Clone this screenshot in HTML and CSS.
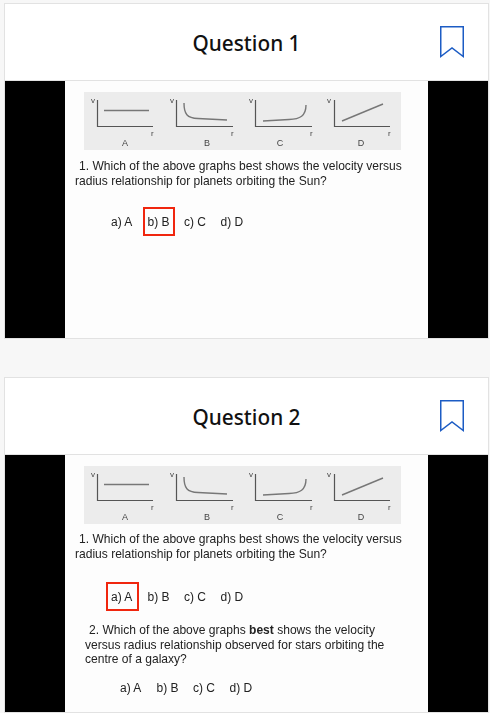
FILE: index.html
```html
<!DOCTYPE html>
<html lang="en">
<head>
    <meta charset="UTF-8">
    <meta name="viewport" content="width=device-width, initial-scale=1.0">
    <title>Questions</title>
    <link rel="stylesheet" href="styles.css">
</head>
<body>
    <!-- Question 1 -->
    <section class="card">
        <header class="card-head">
            <h2 class="card-title">Question 1</h2>
            <svg class="bookmark" width="24" height="32" viewBox="0 0 24 32">
                <path d="M0.75 0.75H23.25V30.5L12 22L0.75 30.5Z"/>
            </svg>
        </header>
        <div class="slide">
            <div class="slide-page">
                <svg class="graphs" width="317" height="58" viewBox="0 0 317 58">
                    <g class="axes">
                        <path d="M13.5 8V34.5H69"/>
                        <path d="M92.5 8V34.5H149"/>
                        <path d="M171.5 8V34.5H228"/>
                        <path d="M250.5 8V34.5H306"/>
                    </g>
                    <g class="curves">
                        <path d="M20 18.5H65"/>
                        <path d="M100 11C100 22 103 26 114 26.5L143 28"/>
                        <path d="M179 29L205 27.5C216 27 222 24 222 13"/>
                        <path d="M258 29L299 12"/>
                    </g>
                    <g class="graph-text">
                        <text x="7" y="11">v</text><text x="86" y="11">v</text><text x="165" y="11">v</text><text x="243" y="11">v</text>
                        <text x="67" y="44">r</text><text x="147" y="44">r</text><text x="226" y="44">r</text><text x="304" y="44">r</text>
                        <text class="graph-label" x="41" y="54">A</text>
                        <text class="graph-label" x="123" y="54">B</text>
                        <text class="graph-label" x="196" y="54">C</text>
                        <text class="graph-label" x="277" y="54">D</text>
                    </g>
                </svg>
                <p class="question">1. Which of the above graphs best shows the velocity versus radius relationship for planets orbiting the Sun?</p>
                <div class="options">
                    <span class="option">a) A</span>
                    <span class="option picked">b) B</span>
                    <span class="option">c) C</span>
                    <span class="option">d) D</span>
                </div>
            </div>
        </div>
    </section>

    <!-- Question 2 -->
    <section class="card">
        <header class="card-head">
            <h2 class="card-title">Question 2</h2>
            <svg class="bookmark" width="24" height="32" viewBox="0 0 24 32">
                <path d="M0.75 0.75H23.25V30.5L12 22L0.75 30.5Z"/>
            </svg>
        </header>
        <div class="slide">
            <div class="slide-page">
                <svg class="graphs" width="317" height="58" viewBox="0 0 317 58">
                    <g class="axes">
                        <path d="M13.5 8V34.5H69"/>
                        <path d="M92.5 8V34.5H149"/>
                        <path d="M171.5 8V34.5H228"/>
                        <path d="M250.5 8V34.5H306"/>
                    </g>
                    <g class="curves">
                        <path d="M20 18.5H65"/>
                        <path d="M100 11C100 22 103 26 114 26.5L143 28"/>
                        <path d="M179 29L205 27.5C216 27 222 24 222 13"/>
                        <path d="M258 29L299 12"/>
                    </g>
                    <g class="graph-text">
                        <text x="7" y="11">v</text><text x="86" y="11">v</text><text x="165" y="11">v</text><text x="243" y="11">v</text>
                        <text x="67" y="44">r</text><text x="147" y="44">r</text><text x="226" y="44">r</text><text x="304" y="44">r</text>
                        <text class="graph-label" x="41" y="54">A</text>
                        <text class="graph-label" x="123" y="54">B</text>
                        <text class="graph-label" x="196" y="54">C</text>
                        <text class="graph-label" x="277" y="54">D</text>
                    </g>
                </svg>
                <p class="question question-low">1. Which of the above graphs best shows the velocity versus radius relationship for planets orbiting the Sun?</p>
                <div class="options options-low">
                    <span class="option picked">a) A</span>
                    <span class="option">b) B</span>
                    <span class="option">c) C</span>
                    <span class="option">d) D</span>
                </div>
                <p class="question question-two">2. Which of the above graphs <b>best</b> shows the velocity<br>versus radius relationship observed for stars orbiting the<br>centre of a galaxy?</p>
                <div class="options options-two">
                    <span class="option">a) A</span>
                    <span class="option">b) B</span>
                    <span class="option">c) C</span>
                    <span class="option">d) D</span>
                </div>
            </div>
        </div>
    </section>
</body>
</html>
```

FILE: styles.css
```css
html, body {
    height: 713px;
    overflow: hidden;
}

body {
    box-sizing: border-box;
    margin: 0;
    padding: 3px 1px 0 4px;
    background-color: #f7f7f7;
    font-family: "Liberation Sans", Arial, sans-serif;
}

.card {
    border: 1px solid #e2e2e2;
    background-color: #fff;
    margin-bottom: 38px;
}

.card:last-child {
    margin-bottom: 0;
}

.card-head {
    display: grid;
    grid-template-columns: 1fr auto 1fr;
    align-items: center;
    height: 76px;
    padding: 0 24px;
    border-bottom: 1px solid #e2e2e2;
}

.card-title {
    grid-column: 2;
    margin: 0;
    padding-top: 2px;
    font-family: "Noto Sans", sans-serif;
    font-size: 20.8px;
    font-weight: 500;
    color: #111;
}

.bookmark {
    grid-column: 3;
    justify-self: end;
    fill: none;
    stroke: #1c5cc4;
    stroke-width: 1.5;
}

/* Black bars either side of the slide */
.slide {
    display: flex;
    justify-content: center;
    height: 257px;
    background-color: #000;
}

.slide-page {
    width: 363px;
    padding-top: 11px;
    background-color: #fdfdfd;
    color: #222;
    filter: blur(0.4px);
}

.graphs {
    display: block;
    margin-left: 19px;
    background-color: #ececec;
}

.axes path, .curves path {
    fill: none;
}

.axes path {
    stroke: #555;
    stroke-width: 1.2;
}

.curves path {
    stroke: #777;
    stroke-width: 1.4;
}

.graph-text {
    font-size: 8px;
    fill: #444;
}

.graph-label {
    text-anchor: middle;
    font-size: 9px;
}

.question {
    width: 340px;
    margin: 9px 0 0 10px;
    font-size: 12.05px;
    line-height: 14.5px;
    text-indent: 4px;
}

.question-low {
    margin-top: 8px;
}

.question-two {
    margin: 12px 0 0 20px;
    width: 318px;
}

.options {
    display: flex;
    gap: 4px;
    margin: 19px 0 0 41px;
    font-size: 12px;
}

.options-low {
    margin-top: 21px;
}

.options-two {
    margin: 6px 0 0 50px;
}

.option {
    box-sizing: border-box;
    width: 32.5px;
    height: 29px;
    padding-left: 3px;
    border: 2px solid transparent;
    line-height: 27px;
    white-space: nowrap;
}

.picked {
    border-color: #f0260e;
}
```
